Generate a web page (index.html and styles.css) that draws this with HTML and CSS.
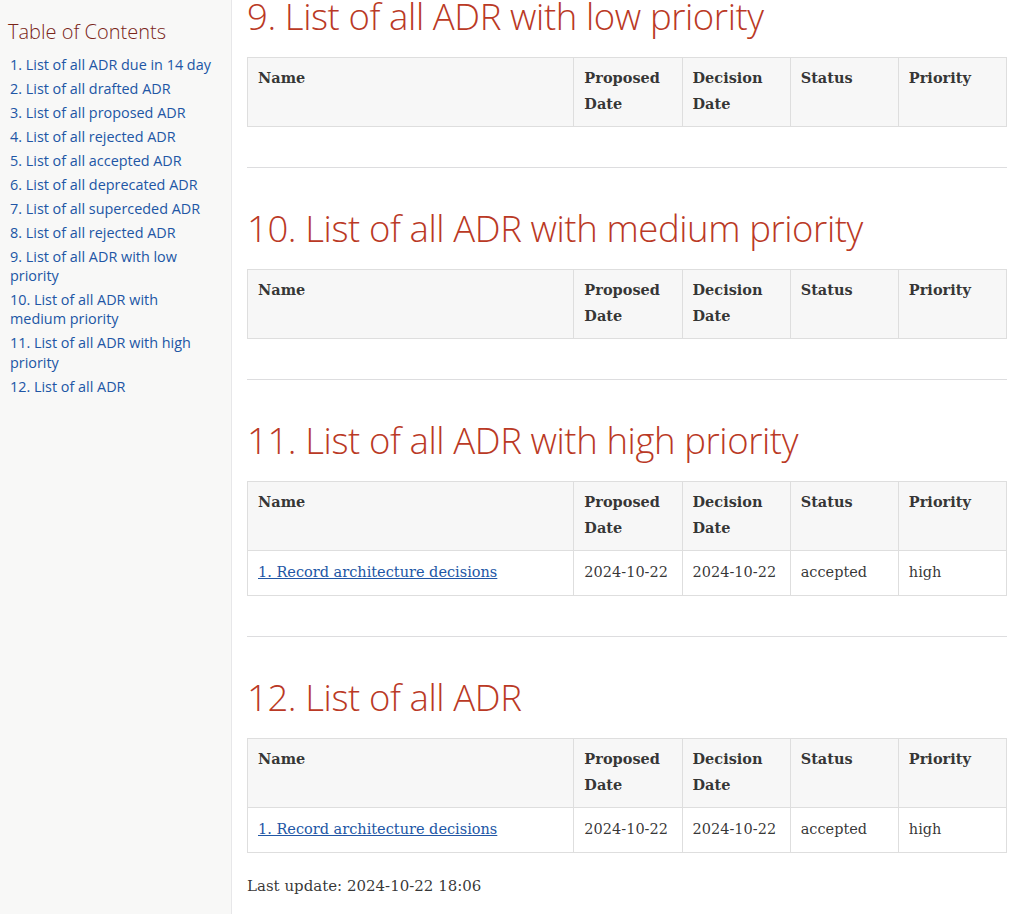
FILE: index.html
```html
<!DOCTYPE html>
<html lang="en">
<head>
<meta charset="utf-8">
<title>ADR Overview</title>
<link rel="stylesheet" href="styles.css">
</head>
<body>
<div class="page">
  <nav class="toc">
    <div class="toc-title">Table of Contents</div>
    <ul class="toc-list">
      <li><a href="#s1">1. List of all ADR due in 14 day</a></li>
      <li><a href="#s2">2. List of all drafted ADR</a></li>
      <li><a href="#s3">3. List of all proposed ADR</a></li>
      <li><a href="#s4">4. List of all rejected ADR</a></li>
      <li><a href="#s5">5. List of all accepted ADR</a></li>
      <li><a href="#s6">6. List of all deprecated ADR</a></li>
      <li><a href="#s7">7. List of all superceded ADR</a></li>
      <li><a href="#s8">8. List of all rejected ADR</a></li>
      <li><a href="#s9">9. List of all ADR with low priority</a></li>
      <li><a href="#s10">10. List of all ADR with medium priority</a></li>
      <li><a href="#s11">11. List of all ADR with high priority</a></li>
      <li><a href="#s12">12. List of all ADR</a></li>
    </ul>
  </nav>
  <main class="content">
    <section class="sect first" id="s9">
      <h2>9. List of all ADR with low priority</h2>
      <table class="adr">
        <colgroup><col class="c-name"><col class="c-date"><col class="c-date"><col class="c-date"><col class="c-date"></colgroup>
        <thead><tr><th>Name</th><th>Proposed Date</th><th>Decision Date</th><th>Status</th><th>Priority</th></tr></thead>
      </table>
    </section>
    <hr class="sep">
    <section class="sect" id="s10">
      <h2>10. List of all ADR with medium priority</h2>
      <table class="adr">
        <colgroup><col class="c-name"><col class="c-date"><col class="c-date"><col class="c-date"><col class="c-date"></colgroup>
        <thead><tr><th>Name</th><th>Proposed Date</th><th>Decision Date</th><th>Status</th><th>Priority</th></tr></thead>
      </table>
    </section>
    <hr class="sep">
    <section class="sect" id="s11">
      <h2>11. List of all ADR with high priority</h2>
      <table class="adr">
        <colgroup><col class="c-name"><col class="c-date"><col class="c-date"><col class="c-date"><col class="c-date"></colgroup>
        <thead><tr><th>Name</th><th>Proposed Date</th><th>Decision Date</th><th>Status</th><th>Priority</th></tr></thead>
        <tbody><tr><td><a href="#adr1">1. Record architecture decisions</a></td><td>2024-10-22</td><td>2024-10-22</td><td>accepted</td><td>high</td></tr></tbody>
      </table>
    </section>
    <hr class="sep">
    <section class="sect" id="s12">
      <h2>12. List of all ADR</h2>
      <table class="adr">
        <colgroup><col class="c-name"><col class="c-date"><col class="c-date"><col class="c-date"><col class="c-date"></colgroup>
        <thead><tr><th>Name</th><th>Proposed Date</th><th>Decision Date</th><th>Status</th><th>Priority</th></tr></thead>
        <tbody><tr><td><a href="#adr1">1. Record architecture decisions</a></td><td>2024-10-22</td><td>2024-10-22</td><td>accepted</td><td>high</td></tr></tbody>
      </table>
    </section>
    <p class="footer">Last update: 2024-10-22 18:06</p>
  </main>
</div>
</body>
</html>
```
FILE: styles.css
```css
html, body {
  margin: 0;
  padding: 0;
  background: #fff;
}
body {
  font-family: "DejaVu Serif", "Noto Serif", serif;
  color: rgba(0, 0, 0, 0.8);
}
.page {
  display: flex;
  height: 914px;
  overflow: hidden;
}
.toc {
  width: 205px;
  flex: 0 0 auto;
  background: #f8f8f7;
  border-right: 1px solid #e7e7e9;
  padding: 19px 18px 0 8px;
  font-family: "Open Sans", sans-serif;
}
.toc-title {
  font-size: 20px;
  font-weight: 300;
  line-height: 26px;
  color: #7a2518;
}
.toc-list {
  list-style: none;
  margin: 10px 0 0 0;
  padding: 0 0 0 2px;
  font-size: 14.4px;
  line-height: 19.2px;
}
.toc-list li {
  margin-top: 4.8px;
}
.toc-list a {
  color: #2156a5;
  text-decoration: none;
}
.content {
  flex: 1 1 auto;
  padding: 0 11px 0 15px;
}
h2 {
  font-family: "Open Sans", sans-serif;
  font-weight: 300;
  font-size: 36.5px;
  line-height: 48px;
  color: #ba3925;
  margin: 0 0 17px 0;
  letter-spacing: -0.4px;
}
.sect.first h2 {
  margin-top: -8px;
}
.sep {
  border: 0;
  border-top: 1px solid #dddddf;
  height: 0;
  margin: 40px 0 36px 0;
}
.adr {
  width: 100%;
  border-collapse: collapse;
  table-layout: fixed;
  font-size: 14.5px;
}
.c-name { width: 43%; }
.c-date { width: 14.25%; }
.adr th, .adr td {
  border: 1px solid #dedede;
  text-align: left;
  vertical-align: top;
  line-height: 26px;
  color: rgba(0, 0, 0, 0.8);
}
.adr th {
  background: #f7f7f7;
  font-weight: bold;
  padding: 7px 10px 9px 10px;
}
.adr td {
  padding: 8px 10px 10px 10px;
}
.adr td a {
  color: #2156a5;
  text-decoration: underline;
}
.footer {
  margin: 20px 0 0 0;
  font-size: 15px;
  line-height: 26px;
}
```
